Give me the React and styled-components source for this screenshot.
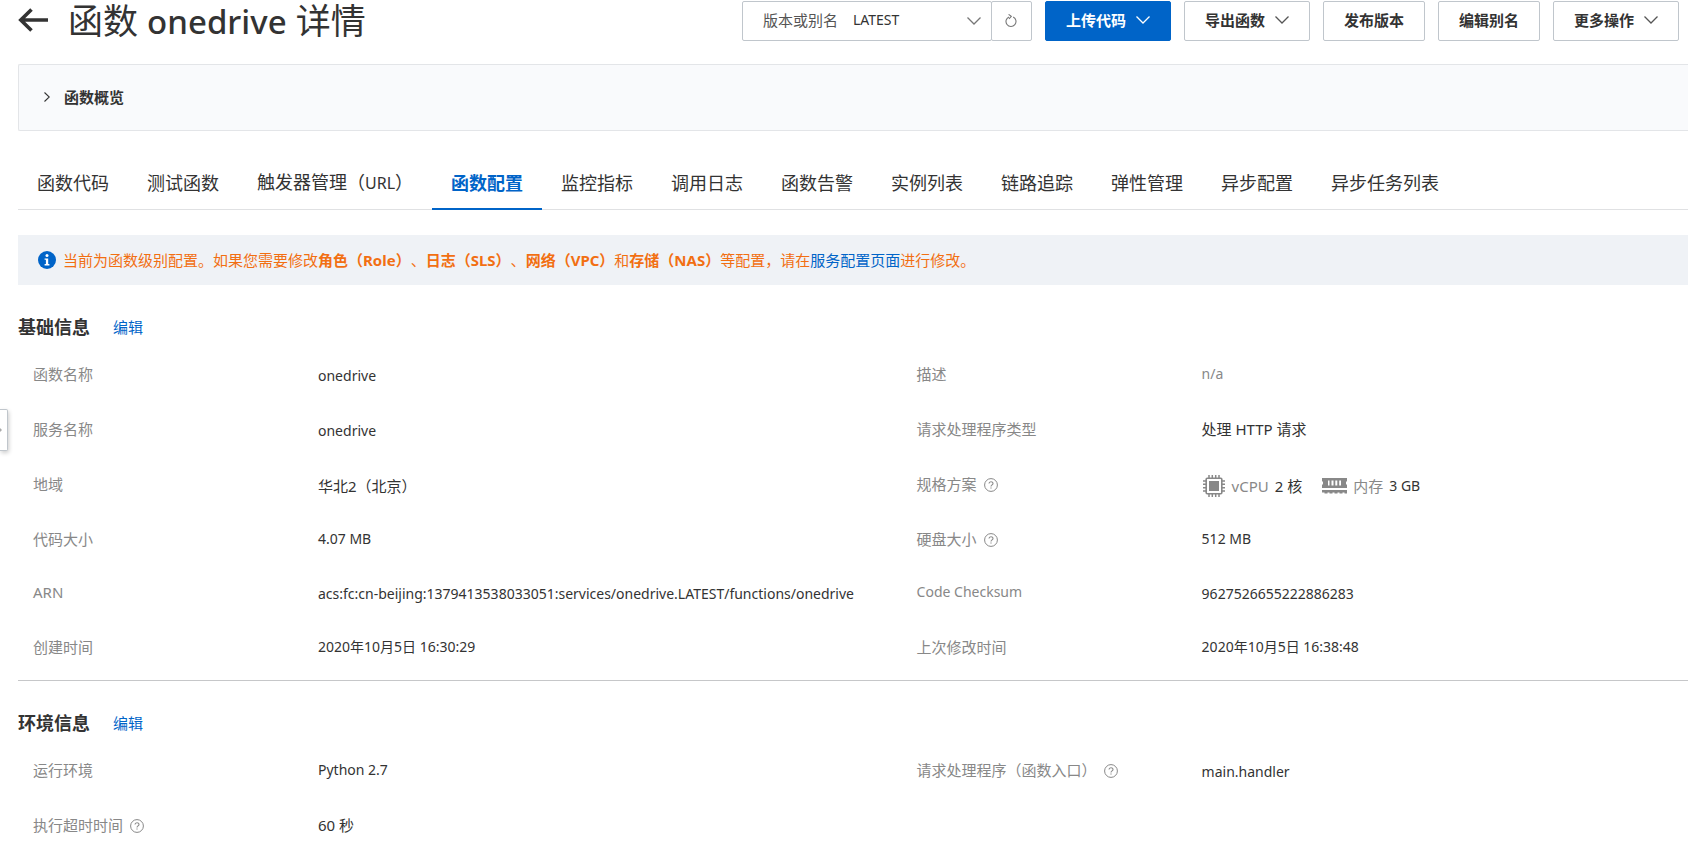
import React, { useState } from "react";
import styled, { createGlobalStyle, css } from "styled-components";

const tabs = [
  { name: "函数代码" },
  { name: "测试函数" },
  { name: "触发器管理", trigger: "URL" },
  { name: "函数配置" },
  { name: "监控指标" },
  { name: "调用日志" },
  { name: "函数告警" },
  { name: "实例列表" },
  { name: "链路追踪" },
  { name: "弹性管理" },
  { name: "异步配置" },
  { name: "异步任务列表" },
];

const ChevronDown = () => (
  <svg width="14" height="8" viewBox="0 0 14 8" fill="none" stroke="currentColor" strokeWidth="1.3" aria-hidden="true">
    <path d="M0.5 0.5L7 7L13.5 0.5" />
  </svg>
);

const ChevronRight = () => (
  <svg width="6" height="10" viewBox="0 0 6 10" fill="none" stroke="currentColor" strokeWidth="1.1" aria-hidden="true">
    <path d="M0.5 0.5L5.3 5L0.5 9.5" />
  </svg>
);

const BackArrow = () => (
  <svg width="30" height="24" viewBox="0 0 30 24" fill="none" stroke="currentColor" strokeWidth="3.6" aria-hidden="true">
    <path d="M13.5 1.5L2.8 12L13.5 22.5M2.8 12H30" />
  </svg>
);

const RefreshIcon = () => (
  <svg width="12" height="14" viewBox="0 0 12 14" fill="none" stroke="#777" strokeWidth="1.1" aria-hidden="true">
    <path d="M8.2 3A5 5 0 1 1 4 2.9" />
    <path d="M3.6 0.4L6.3 2.4L4 4.8" />
  </svg>
);

const InfoIcon = () => (
  <svg width="18" height="18" viewBox="0 0 18 18" aria-hidden="true">
    <circle cx="9" cy="9" r="9" fill="#0064c8" />
    <circle cx="9" cy="4.6" r="1.5" fill="#fff" />
    <path d="M6.6 7.4H10.2V13H11.4V14.4H6.6V13H7.9V8.8H6.6Z" fill="#fff" />
  </svg>
);

const HelpIcon = () => (
  <svg width="14" height="14" viewBox="0 0 14 14" fill="none" stroke="#888" aria-hidden="true">
    <circle cx="7" cy="7" r="6.4" strokeWidth="1" />
    <path d="M5 5.6C5 3.1 9 3.1 9 5.5C9 6.9 7 6.9 7 8.5" strokeWidth="1.1" />
    <path d="M7 9.4V10.6" strokeWidth="1.2" />
  </svg>
);

const CpuIcon = () => (
  <svg width="24" height="22" viewBox="-1 0 24 22" fill="none" stroke="#888" aria-hidden="true">
    <rect x="3.2" y="3.2" width="15.6" height="15.6" rx="1" strokeWidth="1.6" />
    <rect x="6" y="6" width="10" height="10" fill="#888" stroke="none" />
    <path
      d="M6 0V3M9.3 0V3M12.7 0V3M16 0V3M6 19V22M9.3 19V22M12.7 19V22M16 19V22M0 6H3M0 9.3H3M0 12.7H3M0 16H3M19 6H22M19 9.3H22M19 12.7H22M19 16H22"
      strokeWidth="1.5"
    />
  </svg>
);

const MemoryIcon = () => (
  <svg width="25" height="16" viewBox="0 0 25 16" fill="#888" aria-hidden="true">
    <path
      fillRule="evenodd"
      d="M0 0H25V3L24 4V6L25 7V10H0V7L1 6V4L0 3ZM6 2.5V7.5H7.5V2.5ZM9.5 2.5V7.5H11.5V2.5ZM13.3 2.5V7.5H15.3V2.5ZM17.2 2.5V7.5H19V2.5Z"
    />
    <path d="M0 12H25V15.5H22.5V14.5H20.5V15.5H17.5V14.5H15.5V15.5H12.5V14.5H10.5V15.5H7.5V14.5H5.5V15.5H2.5V14.5H0Z" />
  </svg>
);

function Field({ label, help, low, muted, small, smallLabel, children }) {
  return (
    <>
      <Label $small={smallLabel}>
        {label}
        {help && (
          <HelpButton type="button" aria-label={`${label} 说明`}>
            <HelpIcon />
          </HelpButton>
        )}
      </Label>
      <Value $low={low} $muted={muted} $small={small}>
        {children}
      </Value>
    </>
  );
}

export default function App() {
  const [activeTab, setActiveTab] = useState("函数配置");
  const [version, setVersion] = useState("LATEST");

  return (
    <>
      <GlobalStyle />
      <Page>
        <Header>
          <BackButton type="button" aria-label="返回">
            <BackArrow />
          </BackButton>
          <Title>
            函数 <strong>onedrive</strong> 详情
          </Title>
          <Actions>
            <VersionGroup>
              <VersionSelect>
                <label htmlFor="version">版本或别名</label>
                <select id="version" value={version} onChange={(e) => setVersion(e.target.value)}>
                  <option value="LATEST">LATEST</option>
                </select>
                <ChevronDown />
              </VersionSelect>
              <RefreshButton type="button" aria-label="刷新">
                <RefreshIcon />
              </RefreshButton>
            </VersionGroup>
            <Button type="button" $primary>
              上传代码
              <ChevronDown />
            </Button>
            <Button type="button">
              导出函数
              <ChevronDown />
            </Button>
            <Button type="button">发布版本</Button>
            <Button type="button">编辑别名</Button>
            <Button type="button">
              更多操作
              <ChevronDown />
            </Button>
          </Actions>
        </Header>

        <Overview type="button" aria-expanded="false">
          <ChevronRight />
          函数概览
        </Overview>

        <TabBar role="tablist">
          {tabs.map(({ name, trigger }) => (
            <Tab
              key={name}
              type="button"
              role="tab"
              aria-selected={name === activeTab}
              $active={name === activeTab}
              onClick={() => setActiveTab(name)}
            >
              {name}
              {trigger && (
                <>
                  （<small>{trigger}</small>）
                </>
              )}
            </Tab>
          ))}
        </TabBar>

        <Notice>
          <InfoIcon />
          <p>
            当前为函数级别配置。如果您需要修改<b>角色（Role）</b>、<b>日志（SLS）</b>、<b>网络（VPC）</b>和
            <b>存储（NAS）</b>等配置，请在<Link href="#service">服务配置页面</Link>进行修改。
          </p>
        </Notice>

        <section>
          <SectionHead>
            <h2>基础信息</h2>
            <Link href="#edit-basic">编辑</Link>
          </SectionHead>
          <Fields>
            <Field label="函数名称" low small>onedrive</Field>
            <Field label="描述" muted small>n/a</Field>
            <Field label="服务名称" low small>onedrive</Field>
            <Field label="请求处理程序类型">处理 HTTP 请求</Field>
            <Field label="地域" low>华北2（北京）</Field>
            <Field label="规格方案" help low>
              <Spec>
                <CpuIcon />
                <span>vCPU</span>2 核
              </Spec>
              <Spec>
                <MemoryIcon />
                <span>内存</span>
                <small>3 GB</small>
              </Spec>
            </Field>
            <Field label="代码大小" small>4.07 MB</Field>
            <Field label="硬盘大小" help small>512 MB</Field>
            <Field label="ARN" low small>acs:fc:cn-beijing:1379413538033051:services/onedrive.LATEST/functions/onedrive</Field>
            <Field label="Code Checksum" low small smallLabel>9627526655222886283</Field>
            <Field label="创建时间" small>2020年10月5日 16:30:29</Field>
            <Field label="上次修改时间" small>2020年10月5日 16:38:48</Field>
          </Fields>
        </section>

        <Divider />

        <section>
          <SectionHead>
            <h2>环境信息</h2>
            <Link href="#edit-env">编辑</Link>
          </SectionHead>
          <Fields>
            <Field label="运行环境" small>Python 2.7</Field>
            <Field label="请求处理程序（函数入口）" help low small>main.handler</Field>
            <Field label="执行超时时间" help>60 秒</Field>
          </Fields>
        </section>
      </Page>
      <SideHandle type="button" aria-label="展开侧栏">
        <svg width="4" height="6" viewBox="0 0 4 6" fill="#aaa" aria-hidden="true">
          <path d="M0 1L2 3L0 5Z" />
        </svg>
      </SideHandle>
    </>
  );
}

const GlobalStyle = createGlobalStyle`
  * {
    box-sizing: border-box;
  }
  body {
    margin: 0;
    background: #fff;
    color: #333;
    font-family: "Noto Sans", "Noto Sans CJK SC", sans-serif;
    font-size: 15px;
    line-height: 22px;
    text-spacing-trim: space-all;
  }
  button, select {
    font: inherit;
    color: inherit;
    cursor: pointer;
  }
  h1, h2, p, dl, dd {
    margin: 0;
  }
  small {
    font-size: 14px;
  }
  svg {
    flex: none;
  }
`;

const Page = styled.main`
  padding-left: 18px;
`;

const Header = styled.header`
  display: flex;
  align-items: center;
  height: 42px;
  padding-right: 9px;
`;

const BackButton = styled.button`
  display: flex;
  padding: 0 0 2px;
  border: 0;
  background: none;
`;

const Title = styled.h1`
  margin-left: 20px;
  font-size: 35px;
  font-weight: 400;
  line-height: 40px;
  white-space: nowrap;

  strong {
    font-size: 33px;
    font-weight: 500;
  }
`;

const Actions = styled.div`
  display: flex;
  gap: 13px;
  margin-left: auto;
`;

const VersionGroup = styled.div`
  display: flex;
`;

const VersionSelect = styled.div`
  display: flex;
  align-items: center;
  width: 250px;
  height: 40px;
  padding: 0 10px 0 20px;
  border: 1px solid #c0c6cc;
  border-radius: 2px;
  color: #777;

  label {
    padding-bottom: 2px;
    color: #555;
  }

  select {
    flex: 1;
    margin-left: 15px;
    padding: 0 0 2px;
    border: 0;
    background: none;
    color: #333;
    font-size: 14px;
    appearance: none;
  }
`;

const RefreshButton = styled.button`
  display: flex;
  align-items: center;
  justify-content: center;
  width: 41px;
  margin-left: -1px;
  border: 1px solid #c0c6cc;
  border-radius: 2px;
  background: #fff;
`;

const Button = styled.button`
  display: flex;
  align-items: center;
  gap: 10px;
  height: 40px;
  padding: 0 20px 2px;
  border: 1px solid #c0c6cc;
  border-radius: 2px;
  background: #fff;
  font-weight: 700;
  white-space: nowrap;

  svg {
    color: #555;
  }

  ${(props) =>
    props.$primary &&
    css`
      border-color: #0064c8;
      background: #0064c8;
      color: #fff;

      svg {
        color: #fff;
      }
    `}
`;

const Overview = styled.button`
  display: flex;
  align-items: center;
  gap: 14px;
  width: 100%;
  height: 67px;
  margin-top: 22px;
  padding: 0 25px 2px;
  border: 1px solid #e3e5e8;
  border-right: 0;
  border-radius: 2px 0 0 2px;
  background: #f9fafc;
  font-weight: 700;
`;

const TabBar = styled.div`
  display: flex;
  margin-top: 24px;
  box-shadow: inset 0 -1px #e0e1e3;
`;

const Tab = styled.button`
  height: 55px;
  padding: 2px 19px 0;
  border: 0;
  border-bottom: 2px solid ${(props) => (props.$active ? "#0064c8" : "transparent")};
  background: none;
  color: ${(props) => (props.$active ? "#0064c8" : "#333")};
  font-size: 18px;
  font-weight: ${(props) => (props.$active ? 700 : 400)};
  white-space: nowrap;

  small {
    font-size: 16px;
  }
`;

const Notice = styled.div`
  display: flex;
  align-items: center;
  gap: 7px;
  height: 50px;
  margin-top: 25px;
  padding: 0 20px;
  background: #eff2f6;
  color: #f26f12;
`;

const Link = styled.a`
  color: #0064c8;
  text-decoration: none;
`;

const SectionHead = styled.div`
  display: flex;
  align-items: center;
  gap: 23px;
  height: 28px;
  margin-top: 28px;

  h2 {
    font-size: 18px;
    font-weight: 700;
  }
`;

const Fields = styled.dl`
  display: grid;
  grid-template-columns: 285px 16fr 285px 13fr;
  row-gap: 31px;
  padding: 22px 0 0 15px;
`;

const Label = styled.dt`
  display: flex;
  align-items: center;
  gap: 7px;
  height: 22px;
  color: #888;
  font-size: ${(props) => (props.$small ? "14px" : "15px")};
`;

const HelpButton = styled.button`
  display: flex;
  padding: 2px 0 0;
  border: 0;
  background: none;
`;

const Value = styled.dd`
  display: flex;
  gap: 20px;
  height: ${(props) => (props.$low ? "24px" : "22px")};
  padding-top: ${(props) => (props.$low ? "2px" : "0")};
  color: ${(props) => (props.$muted ? "#888" : "#333")};
  font-size: ${(props) => (props.$small ? "14px" : "15px")};
  white-space: nowrap;
`;

const Spec = styled.span`
  display: flex;
  align-items: center;
  gap: 6px;

  span {
    color: #888;
  }
`;

const Divider = styled.hr`
  height: 1px;
  margin: 22px 0 0;
  border: 0;
  background: #c6c7c9;
`;

const SideHandle = styled.button`
  position: absolute;
  top: 409px;
  left: 0;
  display: flex;
  align-items: center;
  width: 8px;
  height: 42px;
  padding: 0;
  border: 1px solid #c0c6cc;
  border-left: 0;
  border-radius: 0 2px 2px 0;
  background: #fff;
  box-shadow: 1px 2px 4px rgba(0, 0, 0, 0.2);
`;
